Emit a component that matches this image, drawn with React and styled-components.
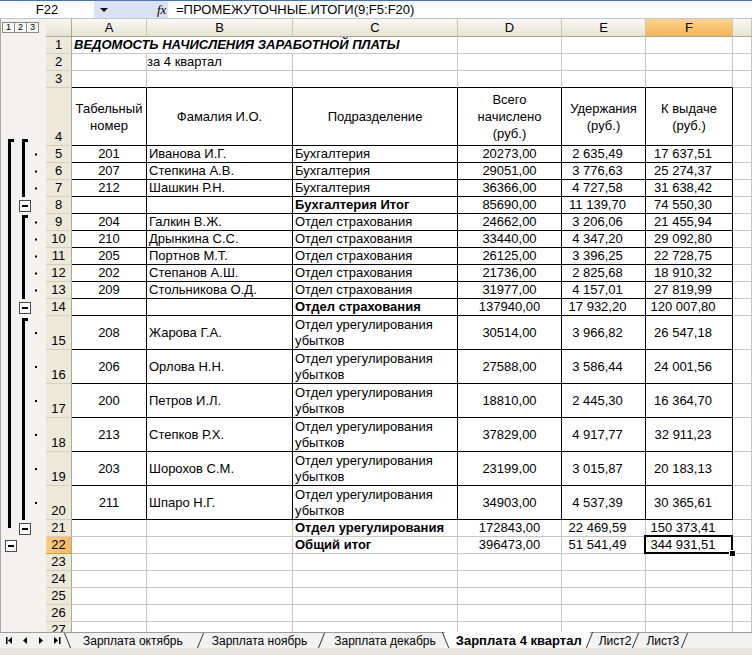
import React from "react";
import styled, { createGlobalStyle } from "styled-components";

const GRID = "#c6c6c6";
const FONT = `"Liberation Sans", Arial, sans-serif`;

const GlobalStyle = createGlobalStyle`
  html, body { margin: 0; padding: 0; background: #fff; }
  body { font-family: ${FONT}; font-size: 13px; color: #000; overflow: hidden; }
`;

const Window = styled.div`
  width: 752px;
  height: 655px;
  display: flex;
  flex-direction: column;
  overflow: hidden;
`;

/* formula bar */
const FormulaBar = styled.div`
  height: 19px;
  flex: none;
  display: flex;
  box-sizing: border-box;
  border-top: 1px solid #4a72b8;
  border-bottom: 1px solid #b9c6de;
`;
const NameBox = styled.div`
  width: 94px;
  display: flex;
  align-items: center;
  justify-content: center;
  background: #fff;
`;
const FxZone = styled.div`
  width: 74px;
  display: flex;
  align-items: center;
  background: #dbe3f2;
`;
const DropArrow = styled.span`
  margin-left: 6px;
  width: 0;
  height: 0;
  border-left: 4px solid transparent;
  border-right: 4px solid transparent;
  border-top: 4px solid #000;
`;
const FxLabel = styled.span`
  margin-left: 49px;
  font-family: "Liberation Serif", serif;
  font-style: italic;
  font-size: 13px;
`;
const FormulaText = styled.div`
  flex: 1;
  display: flex;
  align-items: center;
  padding-left: 8px;
  background: #fff;
  white-space: nowrap;
`;

/* sheet */
const SheetArea = styled.div`
  flex: 1;
  display: flex;
  overflow: hidden;
`;
const Gutter = styled.div`
  width: 46px;
  flex: none;
  display: flex;
  flex-direction: column;
  background: #f3f2ee;
  border-left: 1px solid #a8a8a8;
  box-sizing: border-box;
`;
const LevelBar = styled.div`
  height: 18px;
  flex: none;
  display: flex;
  align-items: flex-start;
  padding: 3px 0 0 1px;
  box-sizing: border-box;
`;
const LevelButton = styled.div`
  width: 13px;
  height: 11px;
  box-sizing: border-box;
  border: 1px solid #8a8a8a;
  margin-right: -1px;
  background: #f7f7f4;
  font-size: 9px;
  line-height: 9px;
  text-align: center;
`;
const Grid = styled.div`
  flex: 1;
  display: flex;
  flex-direction: column;
`;
const Row = styled.div`
  display: grid;
  grid-template-columns: 26px 75px 146px 165px 104px 84px 87px 1fr;
  height: ${(p) => p.$h}px;
  flex: none;
`;
const Corner = styled.div`
  background: linear-gradient(#f7f6f0, #e6e3d3);
  border-right: 1px solid #aca899;
  border-bottom: 1px solid #aca899;
`;
const ColHead = styled.div`
  box-sizing: border-box;
  display: flex;
  align-items: center;
  justify-content: center;
  background: ${(p) =>
    p.$sel ? "linear-gradient(#fcd590, #f5b457)" : "linear-gradient(#f9f8f3, #e7e4d4)"};
  border-right: 1px solid #c9c6b6;
  border-bottom: 1px solid #aca899;
`;
const RowHead = styled.div`
  box-sizing: border-box;
  display: flex;
  align-items: flex-end;
  justify-content: center;
  line-height: 16px;
  background: ${(p) => (p.$sel ? "linear-gradient(90deg, #fbce82, #f5b85f)" : "#ece9d9")};
  border-right: 1px solid #aca899;
  border-bottom: 1px solid ${(p) => (p.$sel ? "#d99a3c" : "#d2cfbf")};
`;
const Cell = styled.div`
  box-sizing: border-box;
  position: relative;
  display: flex;
  align-items: center;
  justify-content: ${(p) =>
    p.$align === "center" ? "center" : p.$align === "right" ? "flex-end" : "flex-start"};
  text-align: ${(p) => p.$align || "left"};
  padding: 0 ${(p) => p.$padR ?? 2}px 0 2px;
  border-right: 1px solid ${(p) => (p.$noRight ? "#fff" : p.$boxed ? "#000" : GRID)};
  border-bottom: 1px solid ${(p) => (p.$boxed || p.$blackBottom ? "#000" : GRID)};
  font-weight: ${(p) => (p.$bold ? 700 : 400)};
  font-style: ${(p) => (p.$italic ? "italic" : "normal")};
  white-space: ${(p) => (p.$wrap ? "normal" : "nowrap")};
  line-height: ${(p) => (p.$wrap ? 17 : 16)}px;
  overflow: ${(p) => (p.$overflow ? "visible" : "hidden")};
  z-index: ${(p) => (p.$overflow || p.$selected ? 2 : "auto")};
  ${(p) =>
    p.$selected &&
    `
    overflow: visible;
    &::before {
      content: "";
      position: absolute;
      left: -2px; top: -2px; right: -1px; bottom: -1px;
      border: 2px solid #000;
    }
    &::after {
      content: "";
      position: absolute;
      right: -4px; bottom: -4px;
      width: 5px; height: 5px;
      background: #000;
      border: 1px solid #fff;
    }
  `}
`;

/* sheet tabs */
const TabBar = styled.div`
  height: 16px;
  flex: none;
  display: flex;
  align-items: stretch;
  background: #f2f2f0;
  border-top: 1px solid #9d9d9d;
  box-sizing: border-box;
`;
const NavGroup = styled.div`
  display: flex;
  align-items: center;
  padding-left: 1px;
  width: 67px;
  flex: none;
  box-sizing: border-box;
`;
const NavButton = styled.div`
  width: 16px;
  display: flex;
  justify-content: center;
  align-items: center;
`;
const Tab = styled.div`
  position: relative;
  display: flex;
  align-items: center;
  padding: 0 ${(p) => p.$pr}px 0 ${(p) => p.$pl}px;
  margin-left: ${(p) => (p.$active ? -8 : 0)}px;
  margin-top: ${(p) => (p.$active ? -1 : 0)}px;
  font-size: ${(p) => (p.$active ? 13 : 12)}px;
  font-weight: ${(p) => (p.$active ? 700 : 400)};
  white-space: nowrap;
  z-index: ${(p) => (p.$active ? 2 : 1)};
  background: ${(p) => (p.$active ? "#fff" : "transparent")};
  &::before {
    content: "";
    display: ${(p) => (p.$leftEdge ? "block" : "none")};
    position: absolute;
    left: 0;
    top: 0;
    bottom: 0;
    width: 1px;
    background: #333;
    transform: skewX(22deg);
  }
  &::after {
    content: "";
    position: absolute;
    right: 0;
    top: 0;
    bottom: 0;
    width: 1px;
    background: #333;
    transform: skewX(-22deg);
  }
`;
const BottomStrip = styled.div`
  height: 7px;
  flex: none;
  background: #e6e5df;
`;

/* data */
const U1 = "Бухгалтерия";
const U2 = "Отдел страхования";
const U3 = "Отдел урегулирования убытков";

const ROWS = [
  { n: 1, h: 17, kind: "title" },
  { n: 2, h: 17, kind: "sub" },
  { n: 3, h: 17, kind: "gap" },
  { n: 4, h: 58, kind: "head" },
  { n: 5, h: 17, kind: "data", v: ["201", "Иванова И.Г.", U1, "20273,00", "2 635,49", "17 637,51"] },
  { n: 6, h: 17, kind: "data", v: ["207", "Степкина А.В.", U1, "29051,00", "3 776,63", "25 274,37"] },
  { n: 7, h: 17, kind: "data", v: ["212", "Шашкин Р.Н.", U1, "36366,00", "4 727,58", "31 638,42"] },
  { n: 8, h: 17, kind: "data", bold: true, v: ["", "", "Бухгалтерия Итог", "85690,00", "11 139,70", "74 550,30"] },
  { n: 9, h: 17, kind: "data", v: ["204", "Галкин В.Ж.", U2, "24662,00", "3 206,06", "21 455,94"] },
  { n: 10, h: 17, kind: "data", v: ["210", "Дрынкина С.С.", U2, "33440,00", "4 347,20", "29 092,80"] },
  { n: 11, h: 17, kind: "data", v: ["205", "Портнов М.Т.", U2, "26125,00", "3 396,25", "22 728,75"] },
  { n: 12, h: 17, kind: "data", v: ["202", "Степанов А.Ш.", U2, "21736,00", "2 825,68", "18 910,32"] },
  { n: 13, h: 17, kind: "data", v: ["209", "Стольникова О.Д.", U2, "31977,00", "4 157,01", "27 819,99"] },
  { n: 14, h: 17, kind: "data", bold: true, v: ["", "", "Отдел страхования", "137940,00", "17 932,20", "120 007,80"] },
  { n: 15, h: 34, kind: "data", v: ["208", "Жарова Г.А.", U3, "30514,00", "3 966,82", "26 547,18"] },
  { n: 16, h: 34, kind: "data", v: ["206", "Орлова Н.Н.", U3, "27588,00", "3 586,44", "24 001,56"] },
  { n: 17, h: 34, kind: "data", v: ["200", "Петров И.Л.", U3, "18810,00", "2 445,30", "16 364,70"] },
  { n: 18, h: 34, kind: "data", v: ["213", "Степков Р.Х.", U3, "37829,00", "4 917,77", "32 911,23"] },
  { n: 19, h: 34, kind: "data", v: ["203", "Шорохов С.М.", U3, "23199,00", "3 015,87", "20 183,13"] },
  { n: 20, h: 34, kind: "data", v: ["211", "Шпаро Н.Г.", U3, "34903,00", "4 537,39", "30 365,61"] },
  { n: 21, h: 17, kind: "total", v: ["", "", "Отдел урегулирования", "172843,00", "22 469,59", "150 373,41"] },
  { n: 22, h: 17, kind: "total", sel: true, v: ["", "", "Общий итог", "396473,00", "51 541,49", "344 931,51"] },
  { n: 23, h: 17, kind: "empty" },
  { n: 24, h: 17, kind: "empty" },
  { n: 25, h: 17, kind: "empty" },
  { n: 26, h: 17, kind: "empty" },
  { n: 27, h: 17, kind: "empty" },
];

const TOPS = {};
ROWS.reduce((y, r) => {
  TOPS[r.n] = y;
  return y + r.h;
}, 0);
const HEIGHT = Object.fromEntries(ROWS.map((r) => [r.n, r.h]));
const mid = (n) => TOPS[n] + HEIGHT[n] / 2;

const COLS = ["A", "B", "C", "D", "E", "F"];

function cellsFor(r) {
  const empty = (k, props = {}) => <Cell key={k} {...props} />;
  if (r.kind === "title") {
    return [
      <Cell key="a" $overflow $noRight $bold $italic>
        ВЕДОМОСТЬ НАЧИСЛЕНИЯ ЗАРАБОТНОЙ ПЛАТЫ
      </Cell>,
      empty("b", { $noRight: true }),
      empty("c"),
      empty("d"),
      empty("e"),
      empty("f"),
      empty("g"),
    ];
  }
  if (r.kind === "sub") {
    return [
      empty("a"),
      <Cell key="b" style={{ paddingLeft: 0 }}>
        за 4 квартал
      </Cell>,
      empty("c"),
      empty("d"),
      empty("e"),
      empty("f"),
      empty("g"),
    ];
  }
  if (r.kind === "gap") {
    return [...COLS.map((c) => empty(c, { $blackBottom: true })), empty("g")];
  }
  if (r.kind === "head") {
    const heads = [
      <>Табельный<br />номер</>,
      "Фамалия И.О.",
      "Подразделение",
      <>Всего<br />начислено<br />(руб.)</>,
      <>Удержания<br />(руб.)</>,
      <>К выдаче<br />(руб.)</>,
    ];
    return [
      ...heads.map((h, i) => (
        <Cell key={i} $boxed $wrap $align="center">
          <span>{h}</span>
        </Cell>
      )),
      empty("g"),
    ];
  }
  if (r.kind === "empty") {
    return [...COLS.map((c) => empty(c)), empty("g")];
  }
  const boxed = r.kind === "data";
  const [a, b, c, d, e, f] = r.v;
  return [
    <Cell key="a" $boxed={boxed} $align="center">{a}</Cell>,
    <Cell key="b" $boxed={boxed}>{b}</Cell>,
    <Cell key="c" $boxed={boxed} $wrap={r.h > 17} $bold={r.bold || r.kind === "total"}
      style={r.h > 17 ? { lineHeight: "16px" } : undefined}>
      {c}
    </Cell>,
    <Cell key="d" $boxed={boxed} $align="center">{d}</Cell>,
    <Cell key="e" $boxed={boxed} $align="center" $padR={14}>{e}</Cell>,
    <Cell key="f" $boxed={boxed} $align="center" $padR={14} $selected={r.sel}>{f}</Cell>,
    empty("g"),
  ];
}

function Bracket({ x, y1, y2 }) {
  return (
    <g fill="#000">
      <rect x={x} y={y1} width={3} height={y2 - y1} />
      <rect x={x} y={y1} width={6} height={3} />
    </g>
  );
}

function Collapse({ x, y }) {
  return (
    <g>
      <rect x={x + 0.5} y={y + 0.5} width={11} height={11} fill="#fff" stroke="#4a4a4a" />
      <rect x={x + 3} y={y + 5} width={6} height={2} fill="#000" />
    </g>
  );
}

const GROUPS = [
  { from: 5, to: 7, sum: 8, top: TOPS[5] - 7 },
  { from: 9, to: 13, sum: 14, top: TOPS[9] + 1 },
  { from: 15, to: 20, sum: 21, top: TOPS[15] + 2 },
];

function OutlineMarks() {
  const dots = [];
  GROUPS.forEach((g) => {
    for (let n = g.from; n <= g.to; n++) dots.push(n);
  });
  return (
    <svg width="45" height="595" style={{ display: "block" }}>
      <Bracket x={7} y1={TOPS[5] - 7} y2={TOPS[21] + 8} />
      <Collapse x={4} y={TOPS[22] + 3} />
      {GROUPS.map((g) => (
        <g key={g.sum}>
          <Bracket x={21} y1={g.top} y2={TOPS[g.sum]} />
          <Collapse x={18} y={TOPS[g.sum] + 3} />
        </g>
      ))}
      {dots.map((n) => (
        <rect key={n} x={34} y={mid(n) - 1} width={2} height={2} fill="#000" />
      ))}
    </svg>
  );
}

function NavIcon({ dir, bar }) {
  const pts = dir === "left" ? "5,0 5,7 1,3.5" : "1,0 1,7 5,3.5";
  return (
    <svg width="7" height="7" viewBox="0 0 7 7">
      {bar && <rect x={dir === "left" ? 0 : 5} y={0} width={1.5} height={7} fill="#000" />}
      <polygon
        points={bar ? (dir === "left" ? "6,0 6,7 2,3.5" : "0,0 0,7 4,3.5") : pts}
        fill="#000"
      />
    </svg>
  );
}

const TABS = [
  { label: "Зарплата октябрь", pl: 16, pr: 18, leftEdge: true },
  { label: "Зарплата ноябрь", pl: 11, pr: 15 },
  { label: "Зарплата декабрь", pl: 12, pr: 17 },
  { label: "Зарплата 4 квартал", pl: 11, pr: 8, active: true, leftEdge: true },
  { label: "Лист2", pl: 9, pr: 5 },
  { label: "Лист3", pl: 10, pr: 6 },
];

export default function App() {
  return (
    <Window>
      <GlobalStyle />
      <FormulaBar>
        <NameBox>F22</NameBox>
        <FxZone>
          <DropArrow />
          <FxLabel>fx</FxLabel>
        </FxZone>
        <FormulaText>=ПРОМЕЖУТОЧНЫЕ.ИТОГИ(9;F5:F20)</FormulaText>
      </FormulaBar>

      <SheetArea>
        <Gutter>
          <LevelBar>
            <LevelButton>1</LevelButton>
            <LevelButton>2</LevelButton>
            <LevelButton>3</LevelButton>
          </LevelBar>
          <OutlineMarks />
        </Gutter>
        <Grid>
          <Row $h={18}>
            <Corner />
            {COLS.map((c) => (
              <ColHead key={c} $sel={c === "F"}>{c}</ColHead>
            ))}
            <ColHead />
          </Row>
          {ROWS.map((r) => (
            <Row key={r.n} $h={r.h}>
              <RowHead $sel={r.sel}>{r.n}</RowHead>
              {cellsFor(r)}
            </Row>
          ))}
        </Grid>
      </SheetArea>

      <TabBar>
        <NavGroup>
          <NavButton><NavIcon dir="left" bar /></NavButton>
          <NavButton><NavIcon dir="left" /></NavButton>
          <NavButton><NavIcon dir="right" /></NavButton>
          <NavButton><NavIcon dir="right" bar /></NavButton>
        </NavGroup>
        {TABS.map((t) => (
          <Tab key={t.label} $pl={t.pl} $pr={t.pr} $active={t.active} $leftEdge={t.leftEdge}>
            {t.label}
          </Tab>
        ))}
      </TabBar>
      <BottomStrip />
    </Window>
  );
}
